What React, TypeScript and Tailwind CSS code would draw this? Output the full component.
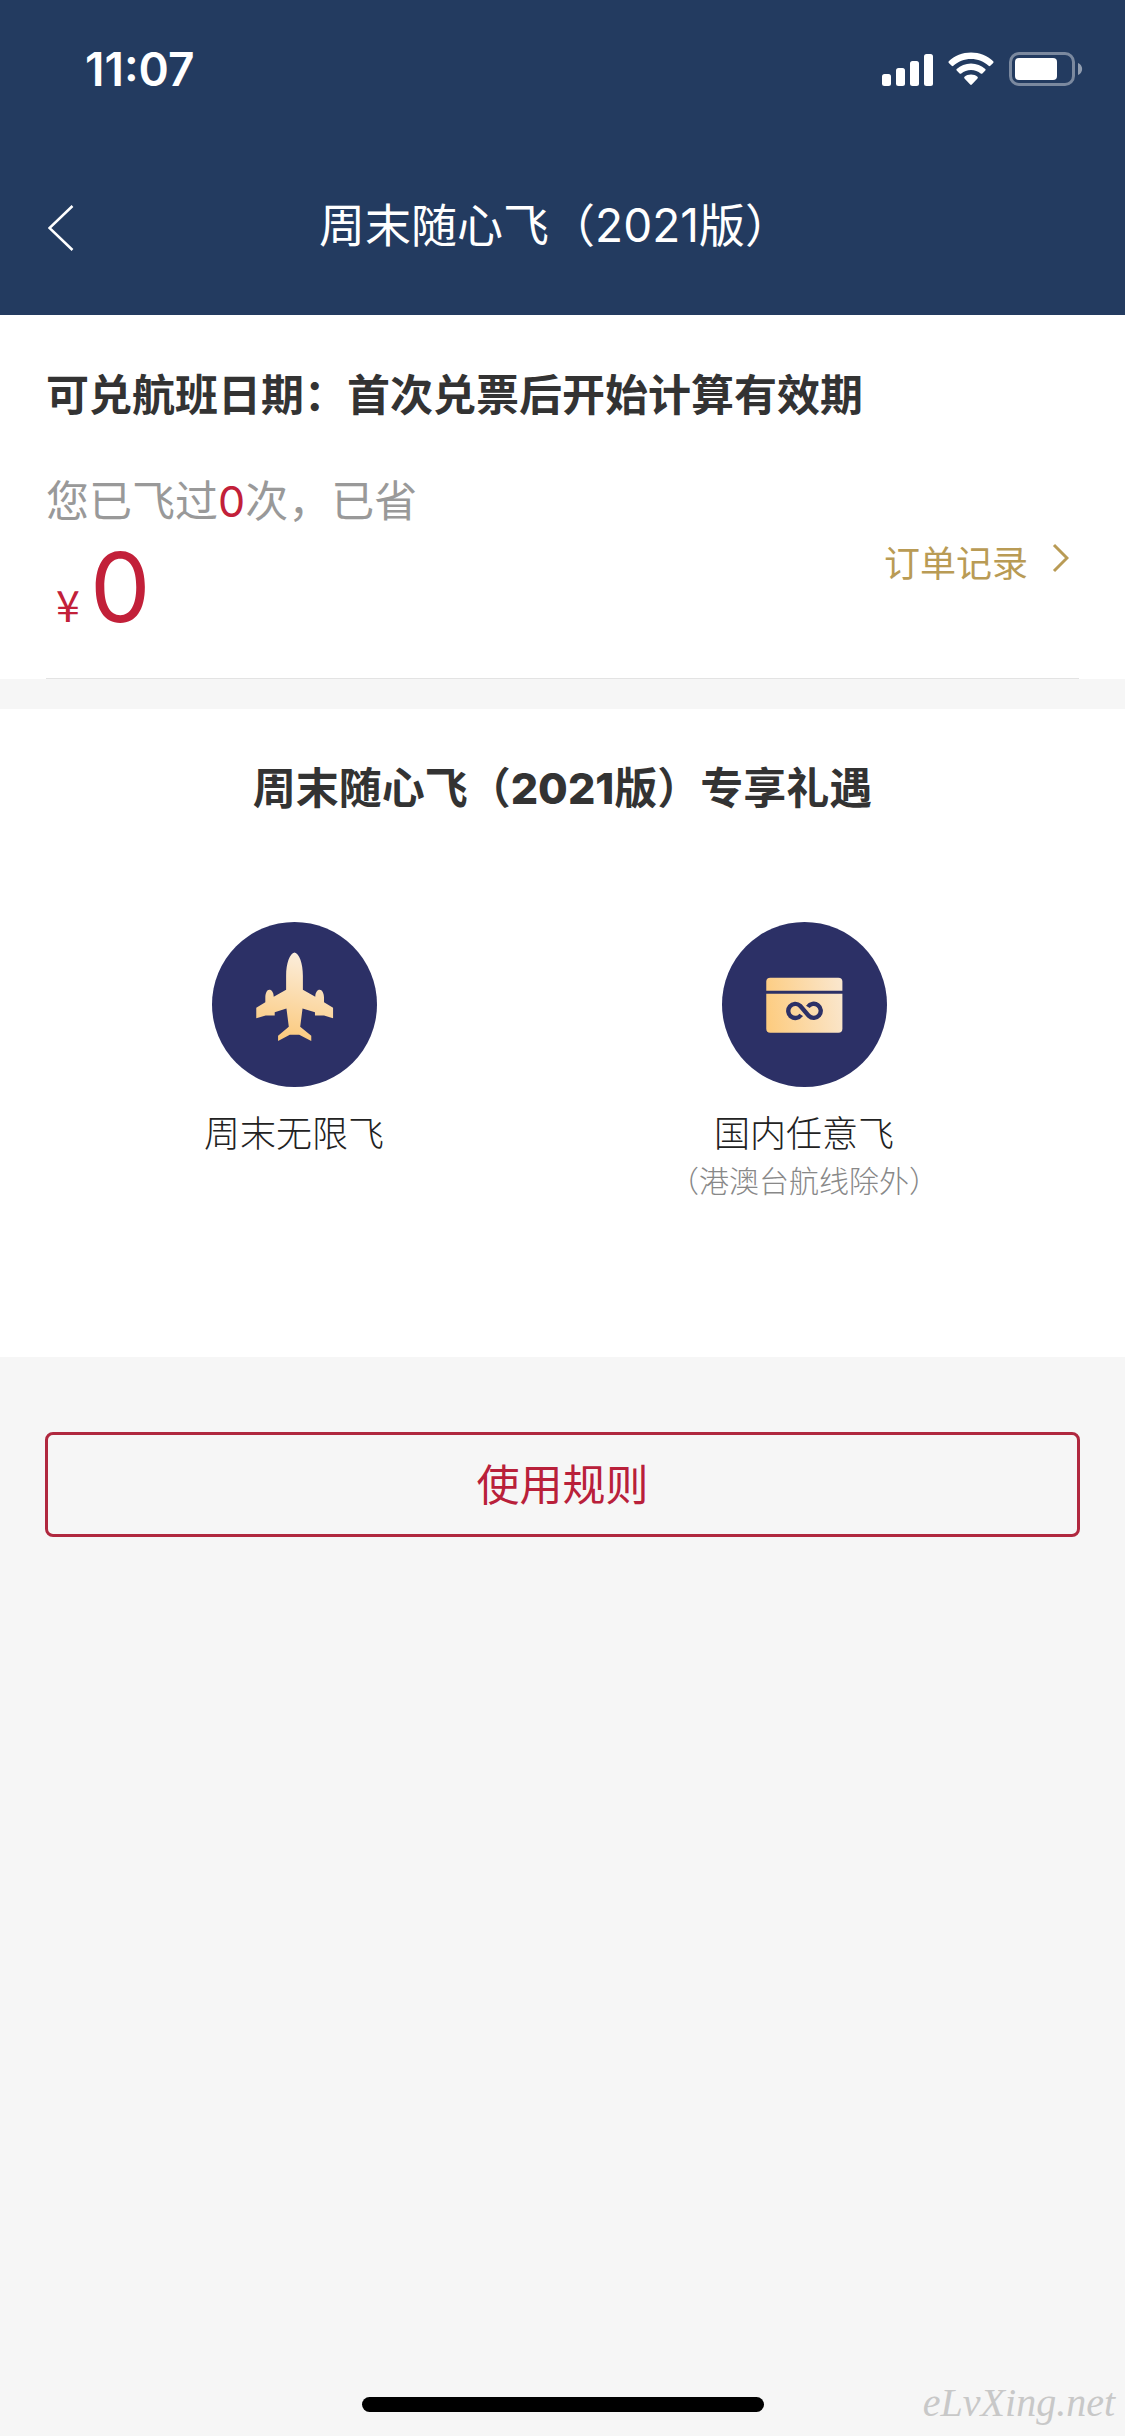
import React from "react";

function StatusBar() {
  return (
    <div className="flex h-[138px] items-center justify-between pl-[85px] pr-[42px]">
      <time className="text-[46px] leading-[54px] font-semibold">11:07</time>
      <div className="flex items-center gap-[15px]">
        <svg className="h-[33px] w-[51px]" viewBox="0 0 51 33" fill="white" aria-label="信号">
          <rect x="0" y="21" width="9" height="12" rx="2.5" />
          <rect x="14" y="15" width="9" height="18" rx="2.5" />
          <rect x="28" y="8" width="9" height="25" rx="2.5" />
          <rect x="42" y="1" width="9" height="32" rx="2.5" />
        </svg>
        <svg className="h-[34px] w-[46px]" viewBox="0 0 46 34" fill="white" aria-label="无线网络">
          <path d="M23 0.5C14.5 0.5 6.600 3.800 0.800 9.200Q0 10 0.800 10.900L3.700 13.800Q4.500 14.500 5.400 13.800C10 9.600 16.200 7.100 23 7.100S36 9.600 40.600 13.800Q41.500 14.500 42.300 13.800L45.200 10.900Q46 10 45.200 9.200C39.400 3.800 31.500 0.500 23 0.500Z" />
          <path d="M23 11.500C17.500 11.500 12.500 13.600 8.700 17Q7.900 17.800 8.700 18.600L11.600 21.500Q12.400 22.200 13.300 21.500C15.900 19.300 19.300 18 23 18S30.100 19.300 32.700 21.500Q33.600 22.200 34.400 21.500L37.300 18.600Q38.100 17.800 37.300 17C33.500 13.600 28.500 11.500 23 11.500Z" />
          <path d="M23 22.500C20.500 22.500 18.200 23.400 16.500 24.800Q15.700 25.600 16.500 26.400L22.200 32.600Q23 33.400 23.800 32.600L29.500 26.400Q30.300 25.600 29.500 24.800C27.800 23.400 25.500 22.500 23 22.500Z" />
        </svg>
        <svg className="h-[34px] w-[74px]" viewBox="0 0 74 34" aria-label="电池">
          <rect x="1.500" y="1.500" width="63" height="31" rx="8.500" fill="none" stroke="white" strokeOpacity="0.4" strokeWidth="3" />
          <rect x="6" y="6" width="42" height="22" rx="4" fill="white" />
          <path d="M69 11C74.500 13 74.500 21 69 23Z" fill="white" fillOpacity="0.5" />
        </svg>
      </div>
    </div>
  );
}

function PlaneIcon() {
  return (
    <svg className="size-[165px]" viewBox="97 62 492 492" aria-hidden="true">
      <defs>
        <linearGradient id="plane" x1="0.600" y1="0" x2="0.400" y2="1">
          <stop offset="0" stopColor="#fbeedd" />
          <stop offset="1" stopColor="#fbc97c" />
        </linearGradient>
      </defs>
      <circle cx="343" cy="308" r="246" fill="#2c3066" />
      <path
        fill="url(#plane)"
        d="M343 153C329 155 318 186 318 222V264L281 285C281 272 275 264 268 264C261 264 256 274 256 288V301L229 318V349L257 341H284V331L319 320L326 374L294 401V417L329 398H357L393 417V401L360 374L367 320L404 331V341H431L458 349V318L431 301V288C431 274 425 264 418 264C411 264 405 272 405 285L368 264V222C368 186 357 155 343 153Z"
      />
    </svg>
  );
}

function CardIcon() {
  return (
    <svg className="size-[165px]" viewBox="188 62 492 492" aria-hidden="true">
      <defs>
        <linearGradient id="card" gradientUnits="userSpaceOnUse" x1="320" y1="330" x2="547" y2="290">
          <stop offset="0" stopColor="#fdcc80" />
          <stop offset="1" stopColor="#fae6cc" />
        </linearGradient>
      </defs>
      <circle cx="434" cy="308" r="246" fill="#2c3066" />
      <path fill="url(#card)" d="M332 228H535Q547 228 547 240V267H320V240Q320 228 332 228Z" />
      <path fill="url(#card)" d="M320 276H547V380Q547 392 535 392H332Q320 392 320 380Z" />
      <path fill="none" stroke="#2c3066" strokeWidth="13" d="M424 339A21 21 0 1 1 421 312L447 342A21 21 0 1 0 444 315" />
    </svg>
  );
}

function Benefit({ icon, title, note }: { icon: React.ReactNode; title: string; note?: string }) {
  return (
    <li className="flex flex-1 flex-col items-center">
      {icon}
      <h3 className="mt-5 text-[36px] leading-[54px] font-light text-[#222222]">{title}</h3>
      {note && <p className="text-[30px] leading-[40px] font-light whitespace-nowrap text-[#888888]">{note}</p>}
    </li>
  );
}

export default function App() {
  return (
    <div
      lang="zh-CN"
      className="relative flex min-h-screen flex-col bg-[#f6f6f6] font-['Inter','Noto_Sans_CJK_SC',sans-serif] text-[#333333]"
    >
      <header className="bg-[#233b60] text-white">
        <StatusBar />
        <div className="flex h-[177px] items-start pt-[51px] pr-[111px] pl-12">
          <button type="button" aria-label="返回" className="w-12 pt-4">
            <svg className="h-[46px] w-[26px]" viewBox="0 0 26 46" fill="none" stroke="white" strokeWidth="2.500">
              <path d="M24.500 1L1.500 23L24.500 45" />
            </svg>
          </button>
          <h1 className="flex-1 text-center text-[46px] leading-[72px] font-normal">周末随心飞（2021版）</h1>
        </div>
      </header>

      <main>
        <section className="bg-white px-[46px] pt-[48px]">
          <h2 className="text-[43px] leading-[64px] font-bold">可兑航班日期：首次兑票后开始计算有效期</h2>
          <div className="flex items-end justify-between border-b border-[#e3e3e3] pt-[42px] pb-[37px]">
            <div>
              <p className="text-[43px] leading-[64px] font-normal text-[#999999]">
                您已飞过<span className="text-[#c22039]">0</span>次，已省
              </p>
              <p className="flex items-baseline gap-[10px] pl-[10px] text-[#c22039]">
                <span className="font-['Noto_Sans_CJK_SC',sans-serif] text-[43px] leading-[64px]">¥</span>
                <span className="text-[96px] leading-[108px]">0</span>
              </p>
            </div>
            <a href="#orders" className="flex items-start gap-6 pr-[10px] pb-[50px] text-[36px] leading-[54px] font-normal text-[#b99b55]">
              订单记录
              <svg className="mt-[6px] h-[30px] w-[17px]" viewBox="0 0 17 30" fill="none" stroke="currentColor" strokeWidth="3">
                <path d="M2 2L15 15L2 28" />
              </svg>
            </a>
          </div>
        </section>

        <section className="mt-[30px] bg-white pt-[47px] pb-[156px]">
          <h2 className="text-center text-[43px] leading-[64px] font-bold">
            周末随心飞（<span className="font-extrabold">2021</span>版）专享礼遇
          </h2>
          <ul className="flex pt-[102px] pr-[66px] pl-[39px]">
            <Benefit icon={<PlaneIcon />} title="周末无限飞" />
            <Benefit icon={<CardIcon />} title="国内任意飞" note="（港澳台航线除外）" />
          </ul>
        </section>

        <div className="px-[45px] pt-[75px]">
          <button
            type="button"
            className="h-[105px] w-full rounded-lg border-3 border-[#b0283f] text-[43px] leading-[64px] font-normal text-[#b9203a]"
          >
            使用规则
          </button>
        </div>
      </main>

      <footer className="mt-auto flex justify-center pb-6">
        <div className="h-[15px] w-[402px] rounded-full bg-black" />
        <span className="absolute right-[10px] bottom-[6px] font-['Liberation_Serif',serif] text-[40px] leading-[54px] text-[#c8c8c8] italic">
          eLvXing.net
        </span>
      </footer>
    </div>
  );
}
